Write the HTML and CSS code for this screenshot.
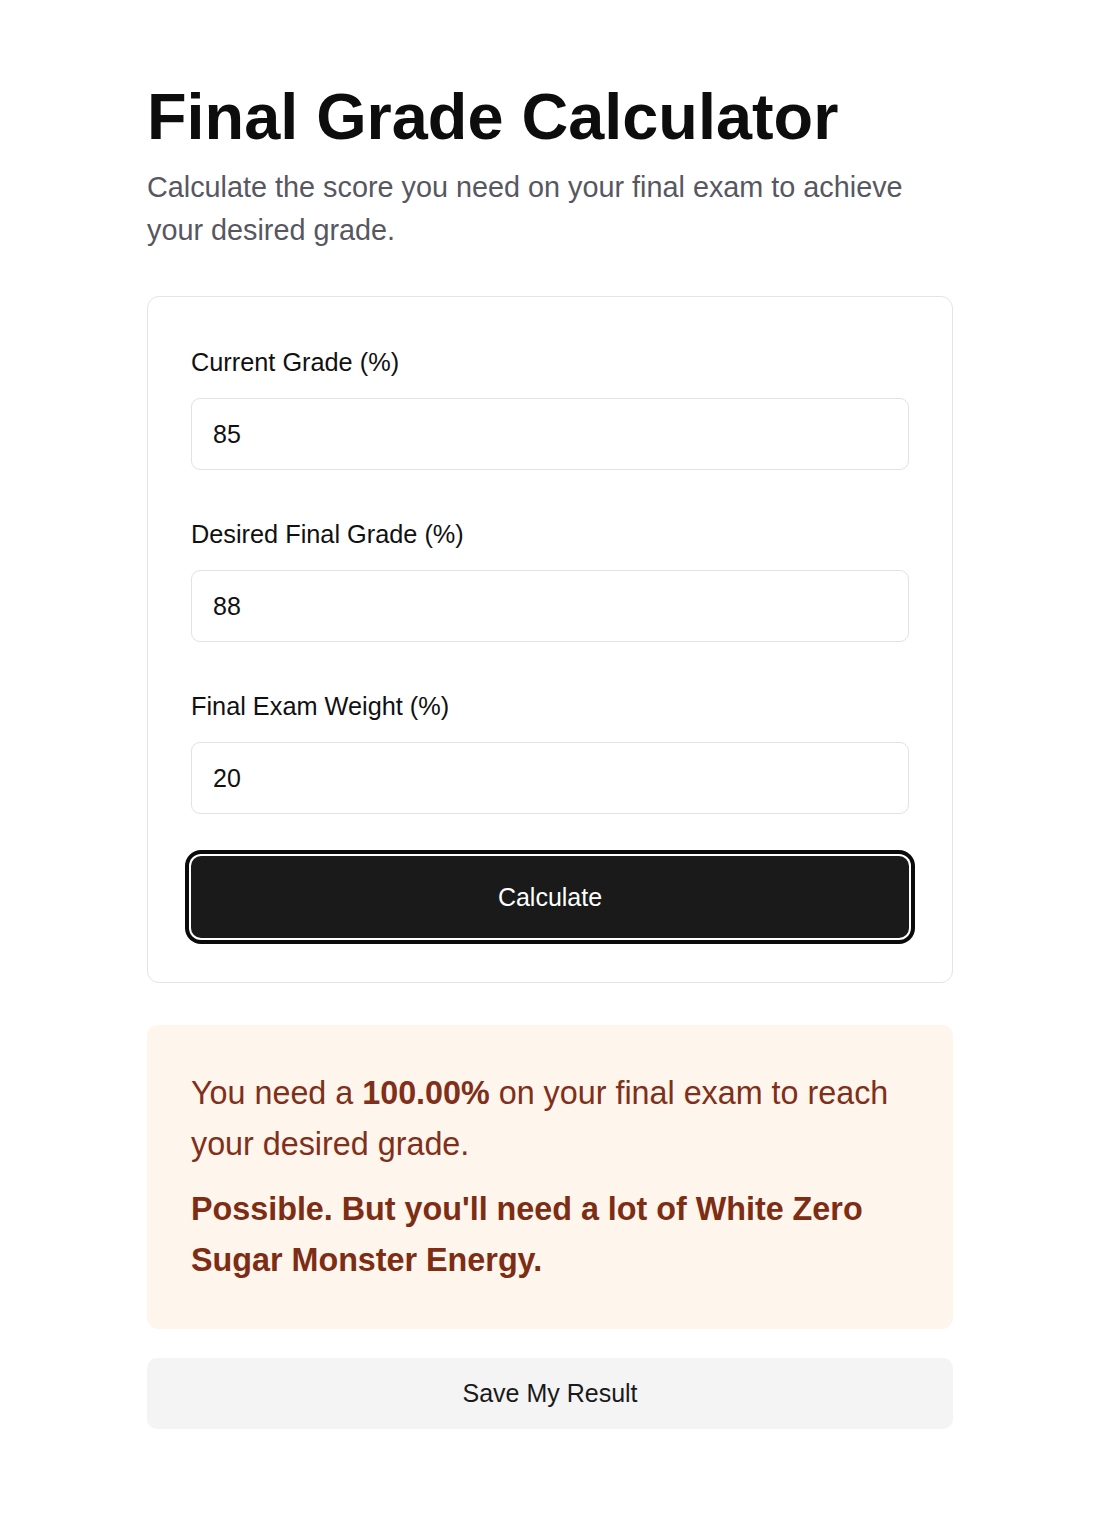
FILE: index.html
```html
<!DOCTYPE html>
<html lang="en">
<head>
<meta charset="utf-8">
<title>Final Grade Calculator</title>
<link rel="stylesheet" href="styles.css">
</head>
<body>
<main class="page">
  <h1 class="title">Final Grade Calculator</h1>
  <p class="subtitle">Calculate the score you need on your final exam to achieve your desired grade.</p>

  <form class="card">
    <div class="field">
      <label class="label" for="current">Current Grade (%)</label>
      <input class="input" id="current" type="text" value="85">
    </div>
    <div class="field">
      <label class="label" for="desired">Desired Final Grade (%)</label>
      <input class="input" id="desired" type="text" value="88">
    </div>
    <div class="field">
      <label class="label" for="weight">Final Exam Weight (%)</label>
      <input class="input" id="weight" type="text" value="20">
    </div>
    <button class="btn-primary" type="button">Calculate</button>
  </form>

  <section class="result">
    <p class="result-line">You need a <strong>100.00%</strong> on your final exam to reach your desired grade.</p>
    <p class="result-note">Possible. But you'll need a lot of White Zero Sugar Monster Energy.</p>
  </section>

  <button class="btn-secondary" type="button">Save My Result</button>
</main>
</body>
</html>
```

FILE: styles.css
```css
* { box-sizing: border-box; }

html, body {
  margin: 0;
  padding: 0;
  background: #ffffff;
}

body {
  font-family: "Liberation Sans", Arial, sans-serif;
  color: #111111;
}

.page {
  width: 806px;
  margin-left: 147px;
  padding: 78px 0 60px;
}

.title {
  margin: 0;
  font-size: 64.8px;
  line-height: 78px;
  font-weight: 700;
  color: #0d0d0d;
}

.subtitle {
  margin: 10px 0 0;
  font-size: 28.8px;
  line-height: 43px;
  color: #575762;
  padding-right: 30px;
}

.card {
  margin-top: 44px;
  border: 1px solid #e4e4e4;
  border-radius: 12px;
  padding: 43px 43px 44px;
  display: flex;
  flex-direction: column;
  gap: 42px;
}

.field {
  display: flex;
  flex-direction: column;
}

.label {
  font-size: 25.3px;
  line-height: 45px;
  color: #111111;
  margin-bottom: 13px;
}

.input {
  height: 72px;
  border: 1px solid #e2e2e2;
  border-radius: 9px;
  padding: 0 21px;
  font-family: "Liberation Sans", Arial, sans-serif;
  font-size: 25px;
  color: #111111;
  background: #ffffff;
  outline: none;
}

.btn-primary {
  height: 82px;
  border: none;
  border-radius: 10px;
  background: #1a1a1a;
  color: #ffffff;
  font-family: "Liberation Sans", Arial, sans-serif;
  font-size: 25px;
  box-shadow: 0 0 0 2px #ffffff, 0 0 0 6px #0a0a0a;
  cursor: pointer;
}

.result {
  margin-top: 42px;
  background: #fef5ec;
  border-radius: 11px;
  padding: 43px 44px;
  color: #80301a;
}

.result p {
  margin: 0;
  font-size: 32.3px;
  line-height: 51px;
}

.result strong { font-weight: 700; }

.result .result-note {
  margin-top: 14px;
  font-weight: 700;
  color: #7c2d14;
}

.btn-secondary {
  display: block;
  width: 100%;
  margin-top: 29px;
  height: 71px;
  border: none;
  border-radius: 10px;
  background: #f4f4f4;
  color: #1a1a1a;
  font-family: "Liberation Sans", Arial, sans-serif;
  font-size: 25px;
  cursor: pointer;
}
```
